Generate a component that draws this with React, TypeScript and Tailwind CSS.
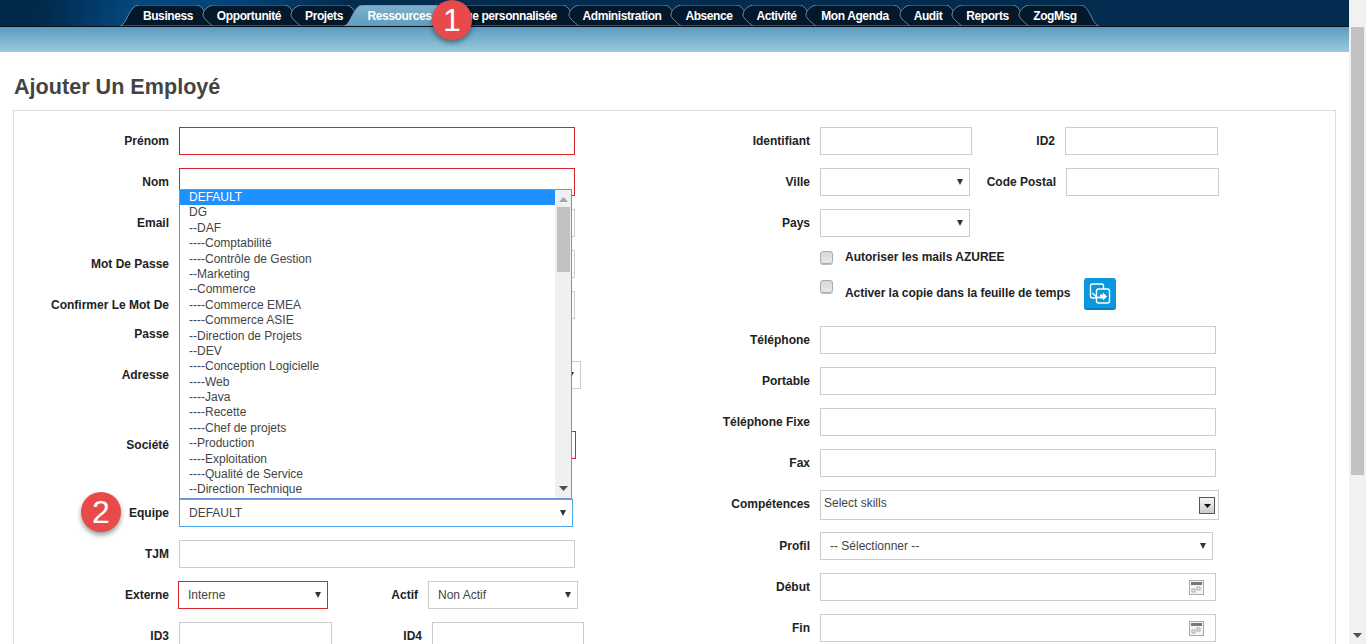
import React from "react";

const tabs: [string, number][] = [
  ["Business", 50], ["Opportunité", 64], ["Projets", 38], ["Ressources", 65], ["Vue personnalisée", 103],
  ["Administration", 78], ["Absence", 48], ["Activité", 39], ["Mon Agenda", 70], ["Audit", 28],
  ["Reports", 43], ["ZogMsg", 44],
];

function Tab({ label, w, active, first }: { label: string; w: number; active?: boolean; first?: boolean }) {
  const W = w + 46;
  const left = active || first ? "M0 21 C7 20 9 0 19 0" : "M19 21 C15 18 9 13 9 10 C9 5 15 0 20 0";
  const d = `${left} L${W - 20} 0 C${W - 15} 0 ${W - 12} 5 ${W - 9} 11 C${W - 7} 15 ${W - 5} 20 ${W - 1} 21 Z`;
  return (
    <div className="relative h-[21px] flex items-center justify-center -mr-[22px]" style={{ width: W }}>
      <svg width={W} height={21} className="absolute inset-0" aria-hidden="true">
        <defs>
          <linearGradient id="activeTab" x1="0" y1="0" x2="0" y2="1">
            <stop offset="0" stopColor="#7fb0cc" />
            <stop offset="1" stopColor="#5e9dbf" />
          </linearGradient>
        </defs>
        <path d={d} fill={active ? "url(#activeTab)" : "#03182b"} stroke="#6d8799" strokeWidth="1" />
      </svg>
      <span className="relative whitespace-nowrap text-[12px] tracking-[-0.4px] font-bold text-white">{label}</span>
    </div>
  );
}

function Bubble({ n, className }: { n: string; className: string }) {
  return (
    <div className={`absolute w-10 h-10 rounded-full bg-[#e84a4b] text-white text-[32px] font-normal leading-10 text-center shadow-[0_3px_5px_rgba(0,0,0,0.4)] ${className}`}>
      {n}
    </div>
  );
}

const labelCls = "text-right text-[12px] font-bold text-[#222] shrink-0";
const inputGray = "h-7 border border-[#ccc] bg-white block shrink-0";
const inputRed = "h-7 border border-[#d9232a] bg-white block shrink-0";
const selCls = "h-7 w-full appearance-none bg-white text-[12px] text-[#444] pl-[9px] block";

function Label({ children, w, className = "" }: { children: React.ReactNode; w: string; className?: string }) {
  return <label className={`${labelCls} ${w} ${className}`}>{children}</label>;
}

function Sel({ w, border, value }: { w: string; border: string; value?: string }) {
  return (
    <div className={`relative shrink-0 h-7 ${w}`}>
      <select defaultValue={value} className={`${selCls} border ${border}`}>
        {value ? <option>{value}</option> : null}
      </select>
      <svg width="6" height="6" viewBox="0 0 6 6" className="absolute right-[7px] top-[11px] pointer-events-none" aria-hidden="true">
        <path d="M0 0 H6 L3 6 Z" fill="#333" />
      </svg>
    </div>
  );
}

function LeftRow({ label, children }: { label: string; children: React.ReactNode }) {
  return (
    <div className="flex items-center gap-[10px] h-7 mb-[13px] relative">
      <Label w="w-[155px]">{label}</Label>
      {children}
    </div>
  );
}

function RightRow({ label, children }: { label: string; children: React.ReactNode }) {
  return (
    <div className="flex items-center gap-[10px] h-7 mb-[13px]">
      <Label w="w-[130px]">{label}</Label>
      {children}
    </div>
  );
}

function Calendar() {
  return (
    <svg width="15" height="15" viewBox="0 0 15 15" className="absolute right-[12px] top-[7px]" aria-hidden="true">
      <rect x="0.5" y="0.5" width="14" height="14" fill="#f4f4f4" stroke="#aaa" />
      <rect x="2" y="2" width="11" height="3" fill="#777" />
      <rect x="3" y="9" width="3" height="3" fill="#f4f4f4" stroke="#999" strokeWidth="0.8" />
      <rect x="8" y="7" width="3" height="3" fill="#f4f4f4" stroke="#999" strokeWidth="0.8" />
    </svg>
  );
}

const teams = [
  "DEFAULT", "DG", "--DAF", "----Comptabilité", "----Contrôle de Gestion", "--Marketing", "--Commerce",
  "----Commerce EMEA", "----Commerce ASIE", "--Direction de Projets", "--DEV", "----Conception Logicielle",
  "----Web", "----Java", "----Recette", "----Chef de projets", "--Production", "----Exploitation",
  "----Qualité de Service", "--Direction Technique",
];

function TeamList() {
  return (
    <div className="absolute left-0 bottom-full w-[393px] h-[310px] border border-[#6c93d8] bg-white flex z-10">
      <div className="flex-1 overflow-hidden">
        {teams.map((t, i) => (
          <div key={t} className={`h-[15.4px] leading-[15.4px] pl-[9px] text-[12px] whitespace-nowrap ${i === 0 ? "bg-[#1e90ff] text-white" : "text-[#444]"}`}>
            {t}
          </div>
        ))}
      </div>
      <div className="w-4 bg-[#f0f0f0] flex flex-col items-center">
        <svg width="9" height="5" viewBox="0 0 9 5" className="mt-[7px]" aria-hidden="true"><path d="M4.5 0 L9 5 H0 Z" fill="#a6a6a6" /></svg>
        <div className="w-[13px] h-[65px] bg-[#c1c1c1] mt-[5px]" />
        <div className="flex-1" />
        <svg width="9" height="5" viewBox="0 0 9 5" className="mb-[7px]" aria-hidden="true"><path d="M0 0 H9 L4.5 5 Z" fill="#505050" /></svg>
      </div>
    </div>
  );
}

function CopyButton() {
  return (
    <div className="w-8 h-8 rounded-[3px] bg-[#0b97de] border-b-2 border-[#0a7fbd] flex items-center justify-center ml-[14px]">
      <svg width="24" height="24" viewBox="0 0 24 24" fill="none" stroke="#fff" strokeWidth="1.4" aria-hidden="true">
        <rect x="2.5" y="3" width="13" height="14" rx="2" />
        <rect x="8.5" y="8" width="13" height="14" rx="2" fill="#0b97de" />
        <path d="M4.5 12 L9 16.5 H15" />
        <path d="M12 13.5 H15 V11.5 L19 15.5 L15 19.5 V17.5 H12 Z" fill="#fff" stroke="none" />
      </svg>
    </div>
  );
}

export default function App() {
  return (
    <div className="h-[644px] w-full overflow-hidden flex font-['Liberation_Sans',Arial,sans-serif] bg-white">
      <div className="flex-1 min-w-0 flex flex-col">
        <header className="relative h-[52px] shrink-0">
          <div className="h-[27px] border-b border-[#04101c] bg-[linear-gradient(97deg,#01294b_0%,#01294b_3%,#04487e_10%,#04447a_17%,#022c50_26%,#022c50_100%)] flex items-end pl-[120px]">
            {tabs.map(([l, w], i) => (
              <Tab key={l} label={l} w={w} active={l === "Ressources"} first={i === 0} />
            ))}
          </div>
          <div className="h-[25px] bg-[linear-gradient(180deg,#5c9bbe_0%,#9acade_100%)]" />
          <Bubble n="1" className="left-[432px] top-0" />
        </header>

        <main className="px-[13px] flex-1 min-h-0">
          <h1 className="text-[21.6px] font-bold text-[#444] leading-[26px] mt-[22px] mb-[10px] ml-px">Ajouter Un Employé</h1>
          <div className="border border-[#ddd] w-[1323px] pt-4 flex">
            <div className="w-[666px] shrink-0">
              <LeftRow label="Prénom"><input className={`${inputRed} w-[396px]`} /></LeftRow>
              <LeftRow label="Nom"><input className={`${inputRed} w-[396px]`} /></LeftRow>
              <LeftRow label="Email"><input className={`${inputGray} w-[396px]`} /></LeftRow>
              <LeftRow label="Mot De Passe"><input className={`${inputGray} w-[396px]`} /></LeftRow>
              <div className="flex gap-[10px] h-[57px] mb-[13px]">
                <Label w="w-[155px]" className="leading-[29px]">Confirmer Le Mot De<br />Passe</Label>
                <input className={`${inputGray} w-[396px]`} />
              </div>
              <div className="flex gap-[10px] h-[57px] mb-[13px]">
                <Label w="w-[155px]" className="leading-7">Adresse</Label>
                <Sel w="w-[402px]" border="border-[#ccc]" />
              </div>
              <div className="flex items-start gap-[10px] h-[55px] mb-[13px]">
                <Label w="w-[155px]" className="leading-7">Société</Label>
                <input className={`${inputRed} w-[397px]`} />
              </div>
              <div className="flex items-center gap-[10px] h-7 mb-[13px] relative">
                <Bubble n="2" className="left-[67px] -top-[7px]" />
                <Label w="w-[155px]">Equipe</Label>
                <div className="relative w-[394px] shrink-0">
                  <TeamList />
                  <Sel w="w-full" border="border-[#4aa8ec]" value="DEFAULT" />
                </div>
              </div>
              <LeftRow label="TJM"><input className={`${inputGray} w-[396px]`} /></LeftRow>
              <div className="flex items-center h-7 mb-[13px]">
                <Label w="w-[155px]" className="mr-[9px]">Externe</Label>
                <Sel w="w-[150px]" border="border-[#d9232a]" value="Interne" />
                <Label w="w-[90px]" className="mr-[10px]">Actif</Label>
                <Sel w="w-[150px]" border="border-[#ccc]" value="Non Actif" />
              </div>
              <div className="flex items-center h-7">
                <Label w="w-[155px]" className="mr-[10px]">ID3</Label>
                <input className={`${inputGray} w-[153px]`} />
                <Label w="w-[90px]" className="mr-[10px]">ID4</Label>
                <input className={`${inputGray} w-[152px]`} />
              </div>
            </div>

            <div className="flex-1">
              <div className="flex items-center h-7 mb-[13px]">
                <Label w="w-[130px]" className="mr-[10px]">Identifiant</Label>
                <input className={`${inputGray} w-[152px]`} />
                <Label w="w-[83px]" className="mr-[10px]">ID2</Label>
                <input className={`${inputGray} w-[153px]`} />
              </div>
              <div className="flex items-center h-7 mb-[13px]">
                <Label w="w-[130px]" className="mr-[10px]">Ville</Label>
                <Sel w="w-[150px]" border="border-[#ccc]" />
                <Label w="w-[86px]" className="mr-[10px]">Code Postal</Label>
                <input className={`${inputGray} w-[153px]`} />
              </div>
              <RightRow label="Pays"><Sel w="w-[150px]" border="border-[#ccc]" /></RightRow>
              <div className="flex items-center h-[14px] ml-[140px] mt-[1px]">
                <div className="w-[13px] h-[13px] rounded-[3px] border border-[#aaa] bg-[linear-gradient(180deg,#d8d8d8,#e8e8e8)] shadow-[0_1px_0_#bbb]" />
                <span className="ml-3 text-[12px] font-bold text-[#222]">Autoriser les mails AZUREE</span>
              </div>
              <div className="flex items-start h-8 ml-[140px] mt-[14px]">
                <div className="w-[13px] h-[13px] rounded-[3px] border border-[#aaa] bg-[linear-gradient(180deg,#d8d8d8,#e8e8e8)] shadow-[0_1px_0_#bbb] mt-[2px]" />
                <span className="ml-3 text-[12px] font-bold tracking-[-0.05px] text-[#222] leading-[31px]">Activer la copie dans la feuille de temps</span>
                <CopyButton />
              </div>
              <div className="mt-4">
                <RightRow label="Téléphone"><input className={`${inputGray} w-[396px]`} /></RightRow>
                <RightRow label="Portable"><input className={`${inputGray} w-[396px]`} /></RightRow>
                <RightRow label="Téléphone Fixe"><input className={`${inputGray} w-[396px]`} /></RightRow>
                <RightRow label="Fax"><input className={`${inputGray} w-[396px]`} /></RightRow>
              </div>
              <div className="flex items-center gap-[10px] h-[30px] mb-3">
                <Label w="w-[130px]" className="mb-[2px]">Compétences</Label>
                <div className="relative w-[399px] h-[30px] border border-[#ccc] text-[12px] text-[#444] pl-[3px] pt-[4px] leading-4">
                  Select skills
                  <div className="absolute right-[3px] top-[6px] w-4 h-[17px] border border-[#555] bg-[linear-gradient(180deg,#f4f4f4,#ccc)] flex items-center justify-center">
                    <svg width="7" height="4" viewBox="0 0 7 4" aria-hidden="true"><path d="M0 0 H7 L3.5 4 Z" fill="#111" /></svg>
                  </div>
                </div>
              </div>
              <RightRow label="Profil"><Sel w="w-[393px]" border="border-[#ccc]" value="-- Sélectionner --" /></RightRow>
              <RightRow label="Début">
                <div className="relative w-[396px] shrink-0"><input className={`${inputGray} w-full`} /><Calendar /></div>
              </RightRow>
              <RightRow label="Fin">
                <div className="relative w-[396px] shrink-0"><input className={`${inputGray} w-full`} /><Calendar /></div>
              </RightRow>
            </div>
          </div>
        </main>
      </div>

      <div className="w-[17px] shrink-0 bg-[#f1f1f1] flex flex-col items-center">
        <div className="h-[27px]" />
        <div className="w-[13px] h-[448px] bg-[#c1c1c1]" />
        <div className="flex-1" />
        <svg width="9" height="5" viewBox="0 0 9 5" className="mb-[6px]" aria-hidden="true"><path d="M0 0 H9 L4.5 5 Z" fill="#505050" /></svg>
      </div>
    </div>
  );
}
